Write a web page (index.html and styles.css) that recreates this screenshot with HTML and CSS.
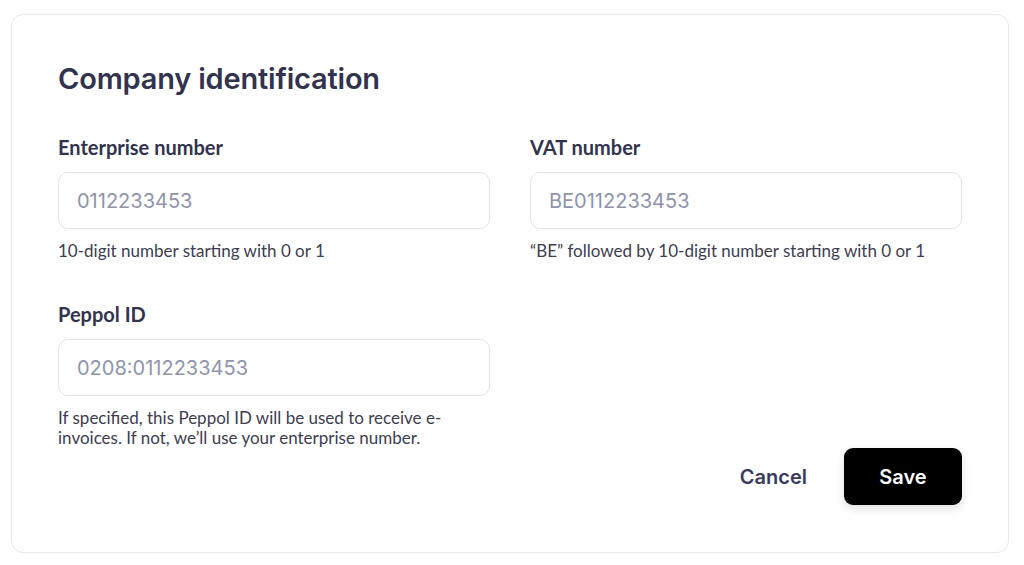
FILE: index.html
```html
<!DOCTYPE html>
<html lang="en">
<head>
    <meta charset="UTF-8">
    <meta name="viewport" content="width=device-width, initial-scale=1.0">
    <title>Company identification</title>
    <link rel="stylesheet" href="styles.css">
</head>
<body>
    <div class="card">
        <h1>Company identification</h1>
        <div class="fields">
            <div class="field">
                <label for="enterprise">Enterprise number</label>
                <input id="enterprise" type="text" placeholder="0112233453">
                <p class="hint">10-digit number starting with 0 or 1</p>
            </div>
            <div class="field">
                <label for="vat">VAT number</label>
                <input id="vat" type="text" placeholder="BE0112233453">
                <p class="hint">“BE” followed by 10-digit number starting with 0 or 1</p>
            </div>
            <div class="field">
                <label for="peppol">Peppol ID</label>
                <input id="peppol" type="text" placeholder="0208:0112233453">
                <p class="hint">If specified, this Peppol ID will be used to receive e-invoices. If not, we’ll use your enterprise number.</p>
            </div>
        </div>
        <div class="actions">
            <button class="btn-cancel" type="button">Cancel</button>
            <button class="btn-save" type="submit">Save</button>
        </div>
    </div>
</body>
</html>
```

FILE: styles.css
```css
* {
    margin: 0;
    padding: 0;
    box-sizing: border-box;
}
body {
    background: #fff;
    padding: 14px 14px 12px 11px;
    font-family: Lato, sans-serif;
    color: #32334e;
}
.card {
    width: 998px;
    border: 1px solid #e6e7ef;
    border-radius: 12px;
    padding: 44px 46px 47px 46px;
}
h1 {
    font-family: Inter, sans-serif;
    font-size: 29px;
    font-weight: 600;
    line-height: 40px;
    color: #32334e;
    letter-spacing: -0.2px;
}
.fields {
    display: grid;
    grid-template-columns: 432px 432px;
    column-gap: 40px;
    row-gap: 40px;
    margin-top: 35px;
}
.field label {
    display: block;
    font-size: 20px;
    font-weight: 700;
    line-height: 26px;
    color: #32334e;
}
.field input {
    display: block;
    width: 100%;
    height: 57px;
    margin-top: 12px;
    padding: 0 18px;
    border: 1px solid #e3e5ee;
    border-radius: 10px;
    font-family: Inter, sans-serif;
    font-size: 20px;
    color: #32334e;
    outline: none;
}
.field input::placeholder {
    color: #8f94ab;
}
.hint {
    margin-top: 12px;
    font-size: 17px;
    line-height: 20px;
    color: #3d3d4f;
}
.actions {
    display: flex;
    justify-content: flex-end;
    align-items: center;
    gap: 37px;
}
.btn-cancel {
    background: none;
    border: none;
    font-family: Inter, sans-serif;
    font-size: 20px;
    font-weight: 600;
    color: #3a3a5c;
    cursor: pointer;
}
.btn-save {
    width: 118px;
    height: 57px;
    background: #000;
    border: none;
    border-radius: 9px;
    font-family: Inter, sans-serif;
    font-size: 20px;
    font-weight: 600;
    color: #fff;
    box-shadow: 0 4px 10px rgba(0, 0, 0, 0.12);
    cursor: pointer;
}
```
